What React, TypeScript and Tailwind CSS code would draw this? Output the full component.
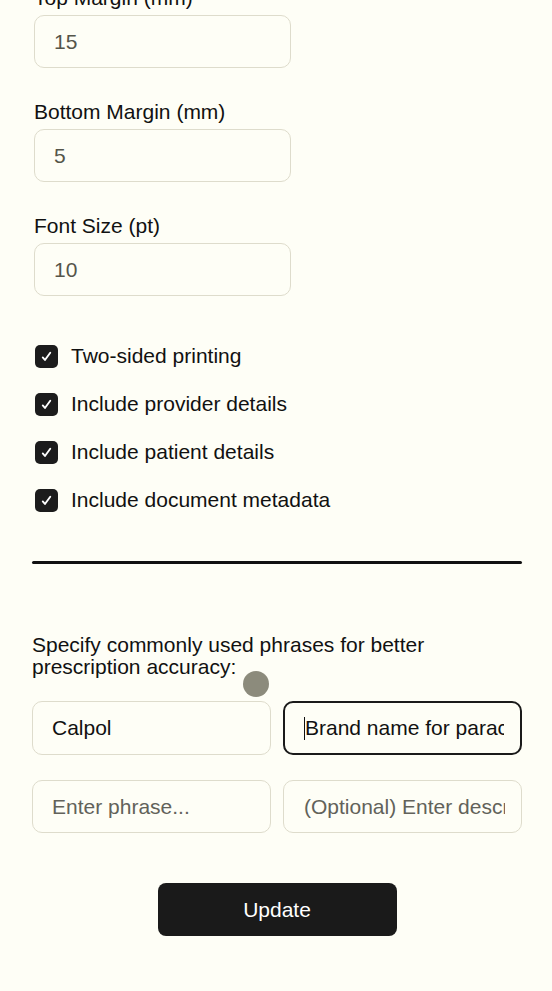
import React from 'react';

const fields = [
  { label: 'Top Margin (mm)', value: '15' },
  { label: 'Bottom Margin (mm)', value: '5' },
  { label: 'Font Size (pt)', value: '10' },
];

const options = [
  'Two-sided printing',
  'Include provider details',
  'Include patient details',
  'Include document metadata',
];

function Check() {
  return (
    <span className="w-[23px] h-[23px] rounded-[5px] bg-[#1c1c1c] flex items-center justify-center shrink-0">
      <svg width="15" height="15" viewBox="0 0 24 24" fill="none" stroke="white" strokeWidth="3" strokeLinecap="round" strokeLinejoin="round">
        <path d="M6 13.5l3.5 4L18 6" />
      </svg>
    </span>
  );
}

export default function App() {
  return (
    <div className="min-h-screen bg-[#fefef6] text-[#111] overflow-hidden relative" style={{ fontFamily: '"Liberation Sans", Arial, sans-serif' }}>
      <div className="pl-[34px] -mt-[13px]">
        {fields.map((f) => (
          <div key={f.label} className="mb-[33px]">
            <label className="block text-[21px] leading-[22px]">{f.label}</label>
            <input
              readOnly
              value={f.value}
              className="mt-[6px] w-[257px] h-[53px] rounded-[10px] border border-[#dedccc] bg-[#fefef6] pl-[19px] text-[21px] text-[#55554a] outline-none"
            />
          </div>
        ))}
        <div className="mt-[48px] flex flex-col gap-[24px]">
          {options.map((o) => (
            <div key={o} className="flex items-center gap-[13px] h-[24px] pl-[1px]">
              <Check />
              <span className="text-[21px] leading-[22px]">{o}</span>
            </div>
          ))}
        </div>
      </div>

      <div className="pl-[32px] pr-[30px] mt-[49px]">
        <div className="h-[3px] w-full bg-[#111] rounded-full" />

        <p className="mt-[70px] text-[21px] leading-[22px]">
          Specify commonly used phrases for better
          <br />
          prescription accuracy:
        </p>

        <div className="mt-[23px] grid grid-cols-2 gap-x-[12px] gap-y-[25px]">
          <input
            readOnly
            value="Calpol"
            className="h-[54px] rounded-[10px] border border-[#dedccc] bg-[#fefef6] pl-[19px] text-[21px] text-[#111] outline-none"
          />
          <div className="relative">
            <input
              readOnly
              value="Brand name for paracetamol"
              className="w-full h-[54px] rounded-[10px] border-2 border-[#1a1a1a] bg-[#fefef6] pl-[20px] pr-[16px] text-[21px] text-[#111] outline-none"
            />
            <span className="absolute left-[21px] top-[16px] w-[1px] h-[23px] bg-[#111]" />
          </div>
          <input
            readOnly
            placeholder="Enter phrase..."
            className="h-[53px] rounded-[10px] border border-[#dedccc] bg-[#fefef6] pl-[19px] text-[21px] placeholder:text-[#62625a] outline-none"
          />
          <input
            readOnly
            placeholder="(Optional) Enter description..."
            className="h-[53px] rounded-[10px] border border-[#dedccc] bg-[#fefef6] pl-[20px] pr-[16px] text-[21px] placeholder:text-[#62625a] outline-none"
          />
        </div>

        <div className="flex justify-center mt-[50px]">
          <button className="w-[239px] h-[53px] rounded-[8px] bg-[#1a1a1a] text-white text-[21px]">Update</button>
        </div>
      </div>

      <span className="absolute left-[243px] top-[671px] w-[26px] h-[26px] rounded-full bg-[#8c8b7c]" />
    </div>
  );
}
